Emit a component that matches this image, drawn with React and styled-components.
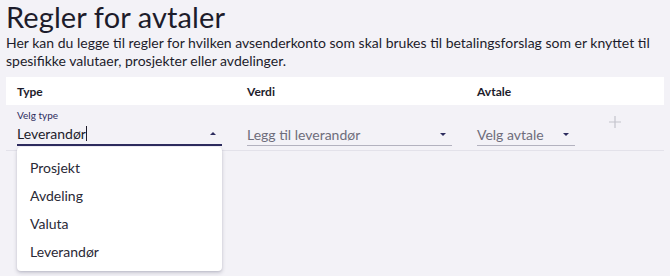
import React from 'react'
import styled, { createGlobalStyle } from 'styled-components'

const Global = createGlobalStyle`
  html, body {
    margin: 0;
    background: #f3f2f7;
    font-family: Lato, "Noto Sans", sans-serif;
    color: #1d1c2b;
  }
`

const Page = styled.div`
  padding: 0 6px;
  min-height: 100vh;
  box-sizing: border-box;
`

const Title = styled.h1`
  margin: 0;
  font-size: 29px;
  font-weight: 400;
  line-height: 34px;
  letter-spacing: 0.1px;
`

const Intro = styled.p`
  margin: 0;
  font-size: 14px;
  line-height: 18px;
  width: 650px;
`

const Table = styled.div`
  margin-top: 7px;
`

const HeadRow = styled.div`
  display: grid;
  grid-template-columns: 230px 230px 130px 1fr;
  height: 28px;
  align-items: center;
  background: #fff;
  padding-left: 11px;
  font-size: 12px;
  font-weight: 700;
`

const Row = styled.div`
  display: grid;
  grid-template-columns: 230px 230px 130px 1fr;
  align-items: end;
  height: 46px;
  padding: 0 0 4px 11px;
  box-sizing: border-box;
  border-bottom: 1px solid #e3e2ea;
`

const Field = styled.div`
  position: relative;
  width: ${(p) => p.$w}px;
`

const Label = styled.div`
  font-size: 10px;
  line-height: 12px;
  color: #2d2c5e;
  margin-bottom: 1px;
`

const Input = styled.div`
  display: flex;
  align-items: center;
  justify-content: space-between;
  height: 22px;
  font-size: 14px;
  color: ${(p) => (p.$muted ? '#6e6d7b' : '#1d1c2b')};
  border-bottom: ${(p) => (p.$active ? '2px solid #2d2c5e' : '1.5px solid #b3b2bf')};
  padding-right: 6px;
`

const Caret = styled.span`
  display: inline-block;
  width: 1px;
  height: 15px;
  background: #1d1c2b;
  vertical-align: -2px;
`

const Arrow = styled.span`
  width: 0;
  height: 0;
  border-left: 3.5px solid transparent;
  border-right: 3.5px solid transparent;
  ${(p) => (p.$up ? 'border-bottom: 3.5px solid #2d2c5e;' : 'border-top: 3.5px solid #2d2c5e;')}
`

const AddButton = styled.div`
  align-self: center;
  margin-left: 2px;
  margin-top: -8px;
  width: 12px;
  height: 12px;
  color: #c4c3cc;
  display: flex;
`

const Menu = styled.div`
  position: absolute;
  top: 100%;
  left: 0;
  width: 100%;
  margin-top: 1px;
  padding: 7px 0 5px;
  background: #fff;
  border-radius: 4px;
  box-shadow: 0 2px 4px rgba(30, 30, 60, 0.18), 0 1px 2px rgba(30, 30, 60, 0.1);
  z-index: 5;
`

const MenuItem = styled.div`
  padding-left: 13px;
  line-height: 28px;
  font-size: 14px;
  color: #2a2936;
`

const options = ['Prosjekt', 'Avdeling', 'Valuta', 'Leverandør']

const App = () => {
  return (
    <Page>
      <Global />
      <Title>Regler for avtaler</Title>
      <Intro>
        Her kan du legge til regler for hvilken avsenderkonto som skal brukes til betalingsforslag som er knyttet til
        spesifikke valutaer, prosjekter eller avdelinger.
      </Intro>
      <Table>
        <HeadRow>
          <span>Type</span>
          <span>Verdi</span>
          <span>Avtale</span>
          <span />
        </HeadRow>
        <Row>
          <Field $w={205}>
            <Label>Velg type</Label>
            <Input $active>
              <span>
                Leverandør<Caret />
              </span>
              <Arrow $up />
            </Input>
            <Menu>
              {options.map((o) => (
                <MenuItem key={o}>{o}</MenuItem>
              ))}
            </Menu>
          </Field>
          <Field $w={205}>
            <Input $muted>
              <span>Legg til leverandør</span>
              <Arrow />
            </Input>
          </Field>
          <Field $w={98}>
            <Input $muted>
              <span>Velg avtale</span>
              <Arrow />
            </Input>
          </Field>
          <AddButton>
            <svg width="12" height="12" viewBox="0 0 12 12">
              <path d="M6 0v12M0 6h12" stroke="currentColor" strokeWidth="1.2" />
            </svg>
          </AddButton>
        </Row>
      </Table>
    </Page>
  )
}

export default App
